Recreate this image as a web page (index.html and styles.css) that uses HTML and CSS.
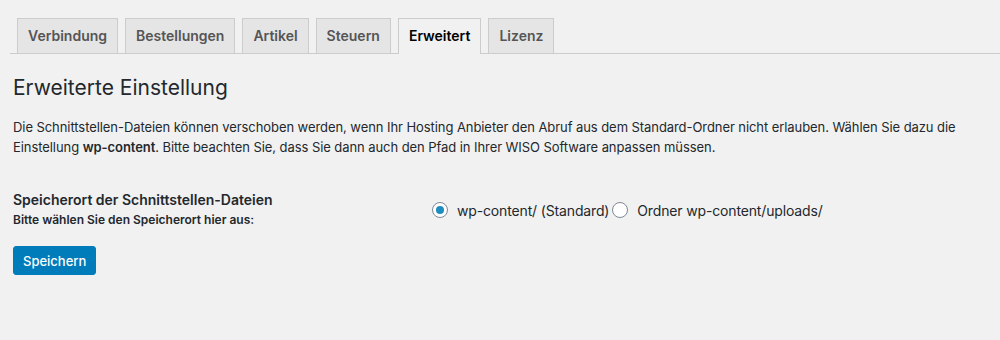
FILE: index.html
```html
<!DOCTYPE html>
<html lang="de">
<head>
<meta charset="utf-8">
<title>Erweiterte Einstellung</title>
<link rel="stylesheet" href="styles.css">
</head>
<body>
<div class="wrap">
  <nav class="tabs">
    <a class="tab">Verbindung</a>
    <a class="tab">Bestellungen</a>
    <a class="tab">Artikel</a>
    <a class="tab">Steuern</a>
    <a class="tab tab-active">Erweitert</a>
    <a class="tab">Lizenz</a>
  </nav>
  <div class="content">
    <h1 class="title">Erweiterte Einstellung</h1>
    <p class="desc">Die Schnittstellen-Dateien können verschoben werden, wenn Ihr Hosting Anbieter den Abruf aus dem Standard-Ordner nicht erlauben. Wählen Sie dazu die Einstellung <strong>wp-content</strong>. Bitte beachten Sie, dass Sie dann auch den Pfad in Ihrer WISO Software anpassen müssen.</p>
    <div class="field">
      <div class="field-label">
        <div class="field-title">Speicherort der Schnittstellen-Dateien</div>
        <div class="field-hint">Bitte wählen Sie den Speicherort hier aus:</div>
      </div>
      <div class="field-options">
        <label class="option"><span class="radio radio-checked"></span>wp-content/ (Standard)</label>
        <label class="option"><span class="radio"></span>Ordner wp-content/uploads/</label>
      </div>
    </div>
    <button class="btn-primary" type="button">Speichern</button>
  </div>
</div>
</body>
</html>
```

FILE: styles.css
```css
html, body {
  margin: 0;
  padding: 0;
  background: #f1f1f1;
}
body {
  font-family: Inter, "Liberation Sans", sans-serif;
  color: #23282d;
  font-size: 13px;
  width: 1000px;
  height: 340px;
  overflow: hidden;
}
.wrap {
  padding-top: 18px;
}
.tabs {
  display: flex;
  margin-left: 10px;
  border-bottom: 1px solid #cccccc;
}
.tab {
  margin-left: 7px;
  padding: 5px 10px;
  font-size: 14px;
  line-height: 24px;
  font-weight: 600;
  color: #555555;
  background: #e5e5e5;
  border: 1px solid #cccccc;
  border-bottom: none;
}
.tab-active {
  background: #f1f1f1;
  color: #000000;
  margin-bottom: -1px;
  padding-bottom: 6px;
}
.content {
  padding-left: 13px;
}
.title {
  margin: 19px 0 0;
  font-size: 21px;
  font-weight: 400;
  line-height: 30px;
  color: #23282d;
}
.desc {
  margin: 15px 0 0;
  font-size: 13px;
  line-height: 19.5px;
  letter-spacing: -0.07px;
  max-width: 965px;
}
.desc strong {
  font-weight: 600;
}
.field {
  display: grid;
  grid-template-columns: 419px auto;
  align-items: center;
  margin-top: 33px;
}
.field-title {
  font-size: 14px;
  font-weight: 600;
  line-height: 20px;
}
.field-hint {
  font-size: 12px;
  font-weight: 600;
  line-height: 17px;
  margin-top: 1px;
}
.field-options {
  display: flex;
  align-items: center;
  font-size: 14px;
  letter-spacing: -0.15px;
  padding-top: 2px;
}
.option {
  display: flex;
  align-items: center;
}
.radio {
  width: 14px;
  height: 14px;
  border: 1px solid #7e8993;
  border-radius: 50%;
  background: #ffffff;
  display: flex;
  align-items: center;
  justify-content: center;
  margin-right: 9px;
}
.option + .option .radio {
  margin-left: 3px;
}
.radio-checked::after {
  content: "";
  width: 8px;
  height: 8px;
  border-radius: 50%;
  background: #1e8cbe;
}
.btn-primary {
  margin-top: 18px;
  height: 29px;
  padding: 0 9px;
  font-family: inherit;
  font-size: 13px;
  font-weight: 500;
  color: #ffffff;
  background: #007cba;
  border: 1px solid #007cba;
  border-radius: 3px;
}
```
